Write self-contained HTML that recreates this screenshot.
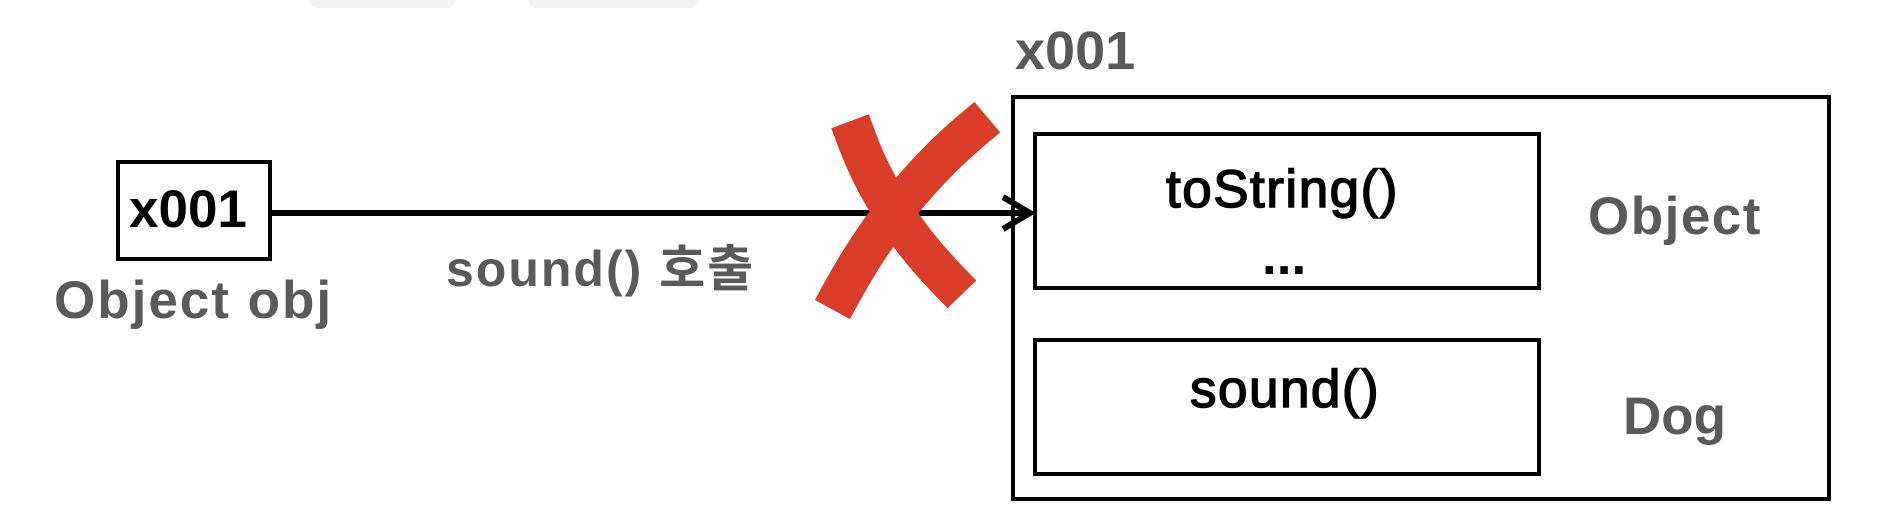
<!DOCTYPE html>
<html><head><meta charset="utf-8"><style>
html,body{margin:0;padding:0;background:#fff;}
body{width:1892px;height:524px;position:relative;overflow:hidden;font-family:"Liberation Sans","Noto Sans CJK KR",sans-serif;font-weight:bold;}
.t{position:absolute;white-space:nowrap;line-height:1;}
.g{color:#5a5a5a;}
.b{position:absolute;border:4px solid #000;box-sizing:border-box;}
</style></head><body>
<div style="position:absolute;left:308px;top:-10px;width:148px;height:18px;background:#f3f4f6;border-radius:10px"></div>
<div style="position:absolute;left:528px;top:-10px;width:170px;height:18px;background:#f3f4f6;border-radius:10px"></div>
<div class="t g" style="left:1015px;top:24px;font-size:54px">x001</div>
<div class="b" style="left:1011px;top:95px;width:820px;height:406px"></div>
<div class="b" style="left:1033px;top:132px;width:508px;height:158px"></div>
<div class="b" style="left:1033px;top:338px;width:508px;height:138px"></div>
<div class="b" style="left:116px;top:160px;width:156px;height:101px"></div>
<div class="t" style="left:129px;top:183px;font-size:53px">x001</div>
<div class="t g" style="left:54px;top:274px;font-size:53px;letter-spacing:2px">Object obj</div>
<div class="t g" style="left:446px;top:244px;font-size:50px;letter-spacing:2px">sound() 호출</div>
<div class="t" style="left:1166px;top:163px;font-size:53px;font-weight:normal;-webkit-text-stroke:1.5px #000;letter-spacing:1.5px">toString()</div>
<div class="t" style="left:1262px;top:230px;font-size:53px">...</div>
<div class="t g" style="left:1588px;top:190px;font-size:53px;letter-spacing:1.5px">Object</div>
<div class="t" style="left:1190px;top:363px;font-size:53px;font-weight:normal;-webkit-text-stroke:1.5px #000;letter-spacing:1.5px">sound()</div>
<div class="t g" style="left:1623px;top:390px;font-size:53px">Dog</div>
<svg style="position:absolute;left:0;top:0" width="1892" height="524">
<line x1="272" y1="213" x2="1030" y2="213" stroke="#000" stroke-width="6"/>
<polyline points="1003,197 1030,213 1003,229" fill="none" stroke="#000" stroke-width="6"/>
<g stroke="#d93c28" stroke-width="40" stroke-linecap="square" fill="none">
<path d="M857,140 Q885,215 948,280"/>
<path d="M972,130 Q895,195 842,292"/>
</g>
</svg>
</body></html>
